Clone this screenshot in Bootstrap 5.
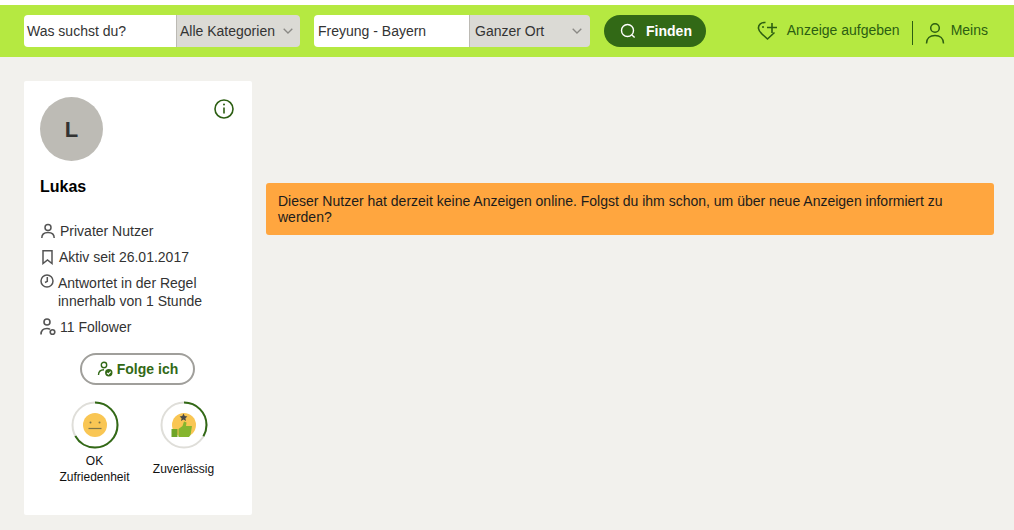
<!DOCTYPE html>
<html lang="de">
<head>
    <meta charset="UTF-8">
    <meta name="viewport" content="width=device-width, initial-scale=1.0">
    <title>Lukas - Profil</title>
    <link href="https://cdn.jsdelivr.net/npm/bootstrap@5.3.0/dist/css/bootstrap.min.css" rel="stylesheet">
    <style>
        html, body { height: 100%; }
        body { background: #f2f1ed; font-family: "Liberation Sans", Arial, sans-serif; font-size: 14px; color: #333; overflow: hidden; }
        .top-strip { height: 5px; background: #fff; }
        .head-bar { height: 52px; background: #b5e941; padding: 10px 26px 10px 24px; }
        .search-box { height: 32px; border-radius: 4px; overflow: hidden; }
        .search-text { background: #fff; color: #333; padding: 0 4px; line-height: 32px; }
        .what-text { width: 152px; padding-left: 3px; }
        .where-text { width: 155px; }
        .search-pick { background: #dbdad5; color: #333; border-left: 1px solid #bcbab4; padding: 0 8px 0 3px; line-height: 32px; }
        .cat-pick { width: 124px; padding-right: 7px; }
        .area-pick { width: 121px; padding-left: 5px; }
        .where-group { margin-left: 14px; }
        .find-btn { margin-left: 14px; width: 102px; height: 32px; border-radius: 16px; background: #326916; color: #fff; font-weight: 700; padding-left: 2px; }
        .find-btn svg { margin-right: 2px; }
        .head-link { color: #2c5e12; line-height: 18px; }
        .head-label { margin-bottom: 2px; }
        .head-sep { width: 1px; height: 24px; background: #2c5e12; margin: 3px 12px 0 12px; }
        .person-icon { margin: 3px 6px 0 0; }
        .main-area { padding: 24px 20px 0 24px; }
        .profile-box { width: 228px; height: 434px; background: #fff; border-radius: 2px; padding: 16px; flex: none; }
        .avatar-round { width: 63px; height: 64px; border-radius: 50%; background: #bdbbb5; font-size: 22px; font-weight: 700; color: #333; }
        .info-icon { top: 18px; right: 18px; }
        .user-name { font-size: 16px; font-weight: 700; color: #000; margin: 16px 0 25px; line-height: 20px; }
        .fact-row { line-height: 18px; margin-bottom: 8px; color: #333; }
        .fact-row svg { flex: none; }
        .follow-row { margin-top: 17px; padding-left: 40px; }
        .follow-btn { width: 115px; height: 32px; border: 2px solid #a09f9b; border-radius: 16px; color: #326916; font-weight: 700; background: #fff; }
        .rate-row { margin-top: 16px; padding-left: 10px; }
        .rate-item { width: 89px; font-size: 12px; line-height: 16px; color: #111; }
        .rate-item svg { display: block; margin: 0 auto; }
        .rate-caption { margin-top: 4px; }
        .rate-single { margin-top: 12px; }
        .notice-box { background: #ffa63f; color: #1c1c1c; border-radius: 3px; padding: 10px 12px; line-height: 16px; margin: 102px 0 0 14px; flex: 1; }
    </style>
</head>
<body>
<div class="top-strip"></div>

<!-- Suchleiste -->
<div class="head-bar d-flex align-items-center">
    <div class="search-box d-flex">
        <div class="search-text what-text">Was suchst du?</div>
        <div class="search-pick cat-pick d-flex justify-content-between align-items-center">
            Alle Kategorien
            <svg width="10" height="6" viewBox="0 0 10 6" fill="none" stroke="#8a8985" stroke-width="1.3"><path d="M.7.7 5 5l4.3-4.3"/></svg>
        </div>
    </div>
    <div class="search-box where-group d-flex">
        <div class="search-text where-text">Freyung - Bayern</div>
        <div class="search-pick area-pick d-flex justify-content-between align-items-center">
            Ganzer Ort
            <svg width="10" height="6" viewBox="0 0 10 6" fill="none" stroke="#8a8985" stroke-width="1.3"><path d="M.7.7 5 5l4.3-4.3"/></svg>
        </div>
    </div>
    <div class="find-btn d-flex align-items-center justify-content-center gap-2">
        <svg width="16" height="16" viewBox="0 0 16 16" fill="none" stroke="#fff" stroke-width="1.4"><circle cx="7.5" cy="7.5" r="6"/><path d="m12 12 2.600 2.600"/></svg>
        Finden
    </div>
    <div class="ms-auto d-flex align-items-center head-link">
        <svg class="me-2" width="22" height="22" viewBox="0 0 22 22" fill="none" stroke="#2c5e12" stroke-width="1.6"><path d="M8.500 2.500C4.500 2 1 4.500 1.500 8.500c.3 2.500 2 4 3.500 5.500l5.500 5 7-6.500"/><circle cx="6" cy="7" r="1" fill="#2c5e12" stroke="none"/><path d="M15 3v10M10 7.500h10"/></svg>
        <span class="head-label">Anzeige aufgeben</span>
        <div class="head-sep"></div>
        <svg class="person-icon" width="20" height="24" viewBox="0 0 20 24" fill="none" stroke="#2c5e12" stroke-width="1.5"><circle cx="10" cy="7" r="4.300"/><path d="M1.500 22.500c0-5 3.500-8 8.500-8s8.500 3 8.500 8"/></svg>
        <span class="head-label">Meins</span>
    </div>
</div>

<div class="d-flex align-items-start main-area">
    <!-- Profil -->
    <div class="profile-box position-relative">
        <div class="avatar-round d-flex align-items-center justify-content-center">L</div>
        <svg class="info-icon position-absolute" width="20" height="20" viewBox="0 0 20 20" fill="none" stroke="#2c5e12" stroke-width="1.6"><circle cx="10" cy="10" r="9"/><path d="M10 8.500v6"/><circle cx="10" cy="5.500" r="1" fill="#2c5e12" stroke="none"/></svg>
        <div class="user-name">Lukas</div>

        <div class="fact-row d-flex align-items-center gap-1">
            <svg width="16" height="16" viewBox="0 0 16 16" fill="none" stroke="#555" stroke-width="1.500"><circle cx="8" cy="4.500" r="3"/><path d="M1.800 15c0-3.500 2.500-5.500 6.200-5.500s6.200 2 6.200 5.500"/></svg>
            Privater Nutzer
        </div>
        <div class="fact-row d-flex align-items-center gap-1">
            <svg width="15" height="16" viewBox="0 0 15 16" fill="none" stroke="#555" stroke-width="1.500"><path d="M3 1.800h9v12.700L7.500 11 3 14.500z"/></svg>
            Aktiv seit 26.01.2017
        </div>
        <div class="fact-row d-flex align-items-start gap-1">
            <svg width="14" height="14" viewBox="0 0 14 14" fill="none" stroke="#555" stroke-width="1.500"><circle cx="7" cy="7" r="6"/><path d="M7.300 3v4.300L5 8.500"/></svg>
            <span>Antwortet in der Regel<br>innerhalb von 1 Stunde</span>
        </div>
        <div class="fact-row d-flex align-items-center gap-1">
            <svg width="16" height="18" viewBox="0 0 16 18" fill="none" stroke="#555" stroke-width="1.600"><circle cx="7" cy="4" r="3"/><path d="M1 16.500c0-4 2.500-6 6-6 1 0 2 .2 3 .7"/><circle cx="12.500" cy="14" r="2.300"/></svg>
            11 Follower
        </div>

        <div class="d-flex follow-row">
            <div class="follow-btn d-flex align-items-center justify-content-center gap-1">
                <svg width="16" height="16" viewBox="0 0 16 16" fill="none" stroke="#326916" stroke-width="1.400"><circle cx="7" cy="4" r="2.700"/><path d="M1.500 14c0-3.500 2-5.300 5.500-5.300"/><circle cx="11.800" cy="11.800" r="3.700" fill="#326916" stroke="none"/><path d="m10 11.800 1.400 1.400 2.300-2.600" stroke="#fff" stroke-width="1.100"/></svg>
                Folge ich
            </div>
        </div>

        <div class="d-flex rate-row text-center">
            <div class="rate-item">
                <svg width="48" height="48" viewBox="0 0 48 48">
                    <circle cx="24" cy="24" r="22.500" fill="none" stroke="#dfded9" stroke-width="2"/>
                    <circle cx="24" cy="24" r="22.500" fill="none" stroke="#326916" stroke-width="2" stroke-dasharray="94 141.400" transform="rotate(-90 24 24)"/>
                    <circle cx="24" cy="24" r="12" fill="#f9c654"/>
                    <rect x="18.500" y="20.500" width="2" height="2" rx="1" fill="#7d7448"/><rect x="27.500" y="20.500" width="2" height="2" rx="1" fill="#7d7448"/>
                    <path d="M17.500 27.500h13" stroke="#7d7448" stroke-width="1.200"/>
                </svg>
                <div class="rate-caption">OK<br>Zufriedenheit</div>
            </div>
            <div class="rate-item">
                <svg width="48" height="48" viewBox="0 0 48 48">
                    <circle cx="24" cy="24" r="22.500" fill="none" stroke="#dfded9" stroke-width="2"/>
                    <circle cx="24" cy="24" r="22.500" fill="none" stroke="#326916" stroke-width="2" stroke-dasharray="47 141.400" transform="rotate(-90 24 24)"/>
                    <circle cx="24" cy="24" r="12" fill="#f9c654"/>
                    <path d="m23.500 12.500 1.200 2.600 2.700.3-2 1.800.6 2.700-2.500-1.400-2.500 1.400.6-2.700-2-1.800 2.700-.3z" fill="#4a4a48"/>
                    <path d="M11.500 28h6v8h-6z" fill="#6fa528"/>
                    <path d="M18.500 28l4-3 1.500-4.500 2.500 1-.5 3.500h6l-1.500 9-1.500 2H18.500z" fill="#85b52e"/>
                </svg>
                <div class="rate-caption rate-single">Zuverlässig</div>
            </div>
        </div>
    </div>

    <!-- Hinweis -->
    <div class="notice-box">Dieser Nutzer hat derzeit keine Anzeigen online. Folgst du ihm schon, um über neue Anzeigen informiert zu werden?</div>
</div>

<script src="https://cdn.jsdelivr.net/npm/bootstrap@5.3.0/dist/js/bootstrap.bundle.min.js"></script>
</body>
</html>
